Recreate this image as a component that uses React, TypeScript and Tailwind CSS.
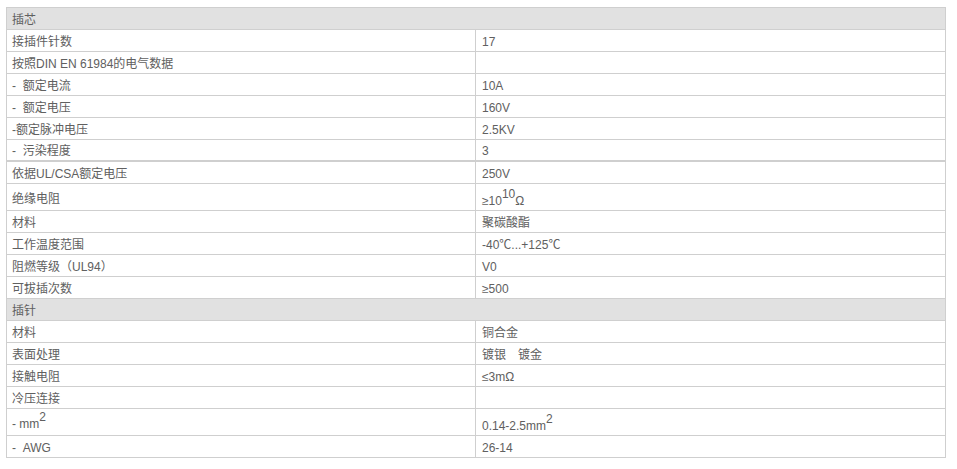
type Row =
  | { kind: "head"; label: string }
  | { kind: "row"; label: React.ReactNode; value?: React.ReactNode; tall?: boolean; thick?: boolean };

const rows: Row[] = [
  { kind: "head", label: "插芯" },
  { kind: "row", label: "接插件针数", value: "17" },
  { kind: "row", label: "按照DIN EN 61984的电气数据" },
  { kind: "row", label: "-\u00a0\u00a0额定电流", value: "10A" },
  { kind: "row", label: "-\u00a0\u00a0额定电压", value: "160V" },
  { kind: "row", label: "-额定脉冲电压", value: "2.5KV" },
  { kind: "row", label: "-\u00a0\u00a0污染程度", value: "3", thick: true },
  { kind: "row", label: "依据UL/CSA额定电压", value: "250V" },
  {
    kind: "row",
    label: "绝缘电阻",
    tall: true,
    value: (
      <>
        ≥10<sup className="text-[12px] -top-[7px]">10</sup>Ω
      </>
    ),
  },
  { kind: "row", label: "材料", value: "聚碳酸酯" },
  { kind: "row", label: "工作温度范围", value: "-40℃...+125℃" },
  { kind: "row", label: "阻燃等级（UL94）", value: "V0" },
  { kind: "row", label: "可拔插次数", value: "≥500" },
  { kind: "head", label: "插针" },
  { kind: "row", label: "材料", value: "铜合金" },
  { kind: "row", label: "表面处理", value: "镀银\u3000镀金" },
  { kind: "row", label: "接触电阻", value: "≤3mΩ" },
  { kind: "row", label: "冷压连接" },
  {
    kind: "row",
    label: (
      <>
        - mm<sup className="text-[12px] -top-[7px]">2</sup>
      </>
    ),
    tall: true,
    value: (
      <>
        0.14-2.5mm<sup className="text-[12px] -top-[7px]">2</sup>
      </>
    ),
  },
  { kind: "row", label: "-\u00a0\u00a0AWG", value: "26-14" },
];

export default function App() {
  return (
    <div
      className="min-h-[469px] bg-white pt-[7px] pl-[6px] text-[12px] text-[#606060]"
      style={{ fontFamily: '"Liberation Sans", "Noto Sans CJK SC", sans-serif' }}
    >
      <div className="w-[940px] border-t border-l border-r border-[#cfcfcf]">
        {rows.map((r, i) =>
          r.kind === "head" ? (
            <div
              key={i}
              className="flex h-[22px] items-center border-b border-[#cfcfcf] bg-[#e1e1e1] pl-[5px] pt-[2px] leading-none"
            >
              {r.label}
            </div>
          ) : (
            <div
              key={i}
              className={`flex ${r.tall ? "h-[27px]" : "h-[22px]"} ${
                r.thick ? "border-b-2" : "border-b"
              } border-[#cfcfcf] leading-none`}
            >
              <div
                className={`flex w-[469px] shrink-0 border-r border-[#cfcfcf] pl-[5px] ${
                  r.tall ? "items-end pb-[5px]" : "items-center pt-[2px]"
                }`}
              >
                <span>{r.label}</span>
              </div>
              <div
                className={`flex flex-1 pl-[6px] ${
                  r.tall ? "items-end pb-[3px]" : "items-center pt-[2px]"
                }`}
              >
                <span>{r.value}</span>
              </div>
            </div>
          )
        )}
      </div>
    </div>
  );
}
